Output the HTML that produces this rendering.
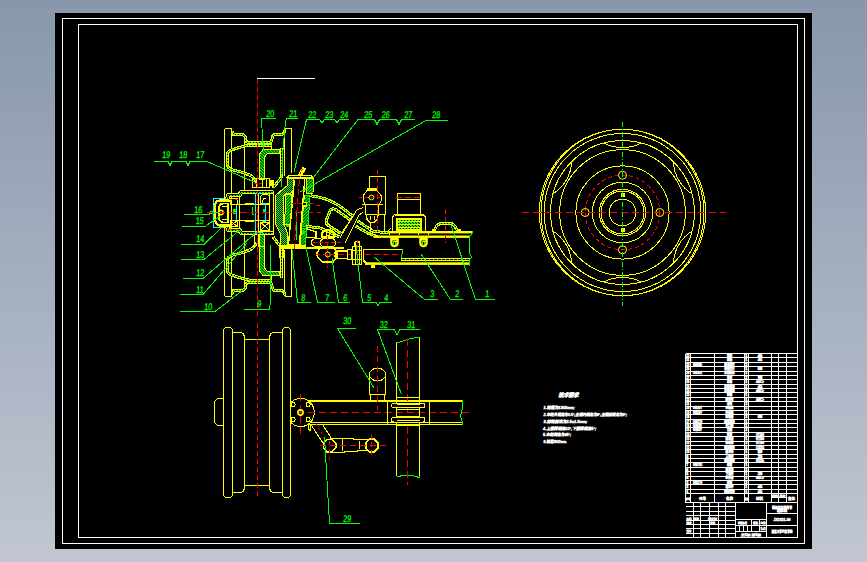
<!DOCTYPE html>
<html lang="zh"><head><meta charset="utf-8"><title>CAD</title>
<style>
html,body{margin:0;padding:0;background:#a5aec2;overflow:hidden}
body{width:867px;height:562px}
svg{display:block}
text{font-family:"Liberation Sans","Noto Sans CJK SC",sans-serif}
</style></head><body>
<svg width="867" height="562" viewBox="0 0 867 562" shape-rendering="crispEdges" text-rendering="optimizeLegibility">
<defs>
<linearGradient id="bg" x1="0" y1="0" x2="0" y2="1"><stop offset="0" stop-color="#8897ac"/><stop offset="1" stop-color="#c1c6d2"/></linearGradient>
<pattern id="h1" width="3" height="3" patternUnits="userSpaceOnUse"><rect width="3" height="3" fill="#000"/><path d="M-1,1 L1,-1 M0,3 L3,0 M2,4 L4,2" stroke="#00ff00" stroke-width="1.25" shape-rendering="geometricPrecision"/></pattern>
<pattern id="h1b" width="3" height="3" patternUnits="userSpaceOnUse"><rect width="3" height="3" fill="#000"/><path d="M-1,2 L1,4 M0,0 L3,3 M2,-1 L4,1" stroke="#00ff00" stroke-width="1.25" shape-rendering="geometricPrecision"/></pattern>
<pattern id="h2" width="2" height="2" patternUnits="userSpaceOnUse"><rect width="2" height="2" fill="#000"/><rect width="1" height="1" fill="#00ff00"/><rect x="1" y="1" width="1" height="1" fill="#00ff00"/></pattern>
<pattern id="h3" x="0" y="218" width="3" height="3" patternUnits="userSpaceOnUse"><rect width="3" height="3" fill="#00ff00"/><rect width="3" height="1" fill="#ffff00"/><rect x="1" y="1" width="1" height="1" fill="#000"/><rect x="2" y="2" width="1" height="1" fill="#000"/></pattern>
</defs>
<rect x="0" y="0" width="867" height="562" fill="url(#bg)"/>
<rect x="55" y="13" width="757" height="536" fill="#000"/>
<rect x="62.5" y="18.5" width="742" height="525" rx="0" fill="none" stroke="#ffffff" stroke-width="1"/>
<rect x="78.5" y="24.5" width="719" height="513" rx="0" fill="none" stroke="#ffffff" stroke-width="1"/>
<circle cx="622.5" cy="212.5" r="83.2" fill="none" stroke="#ffff00" stroke-width="1"/>
<circle cx="622.5" cy="212.5" r="71.9" fill="none" stroke="#ffff00" stroke-width="1"/>
<circle cx="622.5" cy="212.5" r="62.8" fill="none" stroke="#ffff00" stroke-width="1"/>
<circle cx="622.5" cy="212.5" r="46.6" fill="none" stroke="#ffff00" stroke-width="1"/>
<circle cx="622.5" cy="212.5" r="30.2" fill="none" stroke="#ffff00" stroke-width="1"/>
<circle cx="622.5" cy="212.5" r="23.2" fill="none" stroke="#ffff00" stroke-width="1"/>
<circle cx="622.5" cy="212.5" r="21.5" fill="none" stroke="#ffff00" stroke-width="1"/>
<circle cx="622.5" cy="212.5" r="13.4" fill="none" stroke="#ffff00" stroke-width="1"/>
<ellipse cx="622.5" cy="212.5" rx="81.5" ry="83.2" fill="none" stroke="#ff0"/>
<ellipse cx="622.5" cy="212.5" rx="78.4" ry="79" fill="none" stroke="#ff0"/>
<circle cx="622.5" cy="212.5" r="37.3" fill="none" stroke="#ff0000" stroke-width="1" stroke-dasharray="4 3"/>
<circle cx="659.8" cy="212.5" r="4" fill="none" stroke="#ffff00" stroke-width="1" shape-rendering="geometricPrecision"/>
<circle cx="622.5" cy="249.8" r="4" fill="none" stroke="#ffff00" stroke-width="1" shape-rendering="geometricPrecision"/>
<circle cx="585.2" cy="212.5" r="4" fill="none" stroke="#ffff00" stroke-width="1" shape-rendering="geometricPrecision"/>
<circle cx="622.5" cy="175.2" r="4" fill="none" stroke="#ffff00" stroke-width="1" shape-rendering="geometricPrecision"/>
<path d="M603.89,143.05 A40,40 0 0 0 641.11,143.05" fill="none" stroke="#ffff00" stroke-width="1"/>
<path d="M673.34,161.66 A40,40 0 0 0 691.95,193.89" fill="none" stroke="#ffff00" stroke-width="1"/>
<path d="M691.95,231.11 A40,40 0 0 0 673.34,263.34" fill="none" stroke="#ffff00" stroke-width="1"/>
<path d="M641.11,281.95 A40,40 0 0 0 603.89,281.95" fill="none" stroke="#ffff00" stroke-width="1"/>
<path d="M571.66,263.34 A40,40 0 0 0 553.05,231.11" fill="none" stroke="#ffff00" stroke-width="1"/>
<path d="M553.05,193.89 A40,40 0 0 0 571.66,161.66" fill="none" stroke="#ffff00" stroke-width="1"/>
<rect x="621" y="193.5" width="3" height="3" rx="0" fill="#ffff00" stroke="#ffff00" stroke-width="1"/>
<rect x="621" y="228.5" width="3" height="3" rx="0" fill="#ffff00" stroke="#ffff00" stroke-width="1"/>
<line x1="522" y1="212.5" x2="726" y2="212.5" stroke="#ff0000" stroke-width="1" stroke-dasharray="7 4"/>
<line x1="622.5" y1="122" x2="622.5" y2="306" stroke="#00ff00" stroke-width="1" stroke-dasharray="5 2 1 2"/>
<polyline points="223.5,412.5 223.5,329.5 225.5,327.5 230.5,327.5 232.5,329.5 232.5,332.5 241.5,332.5 243.5,334 244.5,337 244.5,339.5 257.5,339.5" fill="none" stroke="#ffff00" stroke-width="1"/>
<polyline points="223.5,412.5 223.5,495.5 225.5,497.5 230.5,497.5 232.5,495.5 232.5,492.5 241.5,492.5 243.5,491 244.5,488 244.5,485.5 257.5,485.5" fill="none" stroke="#ffff00" stroke-width="1"/>
<polyline points="290.5,412.5 290.5,329.5 288.5,327.5 284.5,327.5 282.5,329.5 282.5,332.5 272.5,332.5 270.5,334 269.5,337 269.5,339.5 257.5,339.5" fill="none" stroke="#ffff00" stroke-width="1"/>
<polyline points="290.5,412.5 290.5,495.5 288.5,497.5 284.5,497.5 282.5,495.5 282.5,492.5 272.5,492.5 270.5,491 269.5,488 269.5,485.5 257.5,485.5" fill="none" stroke="#ffff00" stroke-width="1"/>
<line x1="232.5" y1="332.5" x2="232.5" y2="492.5" stroke="#ffff00" stroke-width="1"/>
<line x1="244.5" y1="339.5" x2="244.5" y2="485.5" stroke="#ffff00" stroke-width="1"/>
<line x1="269.5" y1="339.5" x2="269.5" y2="485.5" stroke="#ffff00" stroke-width="1"/>
<line x1="282.5" y1="332.5" x2="282.5" y2="492.5" stroke="#ffff00" stroke-width="1"/>
<line x1="257.5" y1="323" x2="257.5" y2="496" stroke="#ff0000" stroke-width="1" stroke-dasharray="5 3"/>
<path d="M223.5,398.5 H218.5 Q214.5,399.5 214.5,403.5 V420.5 Q214.5,424.5 218.5,425.5 H223.5" fill="none" stroke="#ffff00" stroke-width="1"/>
<path d="M290.5,402.8 A13.7,13.7 0 0 1 314.3,412.5 A13.7,13.7 0 0 1 290.5,422.2" fill="none" stroke="#ffff00" stroke-width="1"/>
<line x1="309" y1="401" x2="463" y2="401" stroke="#ffff00" stroke-width="2"/>
<line x1="311" y1="422.5" x2="463" y2="422.5" stroke="#ffff00" stroke-width="1"/>
<line x1="308" y1="424.5" x2="463" y2="424.5" stroke="#ffff00" stroke-width="1"/>
<line x1="297" y1="412.5" x2="470" y2="412.5" stroke="#ff0000" stroke-width="1" stroke-dasharray="7 4"/>
<line x1="300.5" y1="394" x2="300.5" y2="434" stroke="#ff0000" stroke-width="1" stroke-dasharray="7 4"/>
<circle cx="300.5" cy="412.5" r="2.6" fill="none" stroke="#ffff00" stroke-width="1.6" shape-rendering="geometricPrecision"/>
<rect x="291" y="402.5" width="4" height="4" rx="1.5" fill="none" stroke="#ffff00" stroke-width="1"/>
<rect x="306" y="402.5" width="4" height="4" rx="1.5" fill="none" stroke="#ffff00" stroke-width="1"/>
<rect x="291" y="417.5" width="4" height="4" rx="1.5" fill="none" stroke="#ffff00" stroke-width="1"/>
<rect x="306" y="417.5" width="4" height="4" rx="1.5" fill="none" stroke="#ffff00" stroke-width="1"/>
<polyline points="311.5,425.5 325,446" fill="none" stroke="#ffff00" stroke-width="1"/>
<polyline points="322.5,424.5 331.5,438.5" fill="none" stroke="#ffff00" stroke-width="1"/>
<polyline points="308,424.5 308,428.5 310,430.5 311,427 310,424.5" fill="none" stroke="#ffff00" stroke-width="1"/>
<line x1="316" y1="424" x2="326" y2="441" stroke="#ff0000" stroke-width="1" stroke-dasharray="2 3"/>
<polygon points="335.81,447.99 332.29,451.51 327.31,451.51 323.79,447.99 323.79,443.01 327.31,439.49 332.29,439.49 335.81,443.01" fill="none" stroke="#ffff00" stroke-width="1.4"/>
<polygon points="377.8,448.03 374.23,451.6 369.17,451.6 365.6,448.03 365.6,442.97 369.17,439.4 374.23,439.4 377.8,442.97" fill="none" stroke="#ffff00" stroke-width="2"/>
<polyline points="330,438.5 353,438.5 353,439.5 368,439.5" fill="none" stroke="#ffff00" stroke-width="1"/>
<polyline points="325,452.5 344,452.5 344,451.5 357,451.5 357,450.5 367,450.5" fill="none" stroke="#ffff00" stroke-width="1"/>
<line x1="342.5" y1="439" x2="342.5" y2="451" stroke="#ffff00" stroke-width="1"/>
<line x1="359.5" y1="441" x2="359.5" y2="449" stroke="#ffff00" stroke-width="1"/>
<line x1="320" y1="445.5" x2="386" y2="445.5" stroke="#ff0000" stroke-width="1" stroke-dasharray="6 4"/>
<line x1="329.5" y1="441" x2="329.5" y2="460" stroke="#ff0000" stroke-width="1" stroke-dasharray="4 4"/>
<line x1="371.5" y1="434" x2="371.5" y2="456" stroke="#ff0000" stroke-width="1" stroke-dasharray="5 3"/>
<ellipse cx="377.5" cy="374.5" rx="8" ry="6.5" fill="none" stroke="#ffff00"/>
<line x1="369.5" y1="374" x2="369.5" y2="394.5" stroke="#ffff00" stroke-width="1"/>
<line x1="385.5" y1="374" x2="385.5" y2="394.5" stroke="#ffff00" stroke-width="1"/>
<rect x="370.5" y="394.5" width="14" height="6" rx="0" fill="none" stroke="#ffff00" stroke-width="1"/>
<line x1="377.5" y1="346" x2="377.5" y2="410" stroke="#ff0000" stroke-width="1" stroke-dasharray="6 4"/>
<line x1="396.5" y1="342" x2="396.5" y2="476" stroke="#ffff00" stroke-width="1"/>
<line x1="419.5" y1="337" x2="419.5" y2="476" stroke="#ffff00" stroke-width="1"/>
<polyline points="396.5,342 399,342.5 407,339.5 414,338 420,337" fill="none" stroke="#00ff00" stroke-width="1"/>
<polyline points="396.5,476.5 400,476.5 401,475.5 412,475.5 416,476.5 419,477.5 420,476" fill="none" stroke="#00ff00" stroke-width="1"/>
<line x1="407.5" y1="339" x2="407.5" y2="485" stroke="#ff0000" stroke-width="1" stroke-dasharray="7 4"/>
<line x1="396.5" y1="397.5" x2="419.5" y2="397.5" stroke="#ffff00" stroke-width="1"/>
<line x1="396.5" y1="409.5" x2="419.5" y2="409.5" stroke="#ffff00" stroke-width="1"/>
<line x1="396.5" y1="416.5" x2="419.5" y2="416.5" stroke="#ffff00" stroke-width="1"/>
<line x1="396.5" y1="425.5" x2="419.5" y2="425.5" stroke="#ffff00" stroke-width="1"/>
<line x1="387.5" y1="401" x2="387.5" y2="424" stroke="#ffff00" stroke-width="1"/>
<line x1="429.5" y1="401" x2="429.5" y2="424" stroke="#ffff00" stroke-width="1"/>
<rect x="391.5" y="403.5" width="33.5" height="4" rx="2" fill="#000000" stroke="#ffff00" stroke-width="1"/>
<rect x="391.5" y="417.5" width="33.5" height="4.5" rx="2" fill="#000000" stroke="#ffff00" stroke-width="1"/>
<line x1="396.5" y1="404.5" x2="419.5" y2="404.5" stroke="#ffff00" stroke-width="1"/>
<line x1="396.5" y1="420.5" x2="419.5" y2="420.5" stroke="#ffff00" stroke-width="1"/>
<polyline points="462.5,400 462.5,408 461.5,412 460.5,417 462,421 462.5,425" fill="none" stroke="#00ff00" stroke-width="1"/>
<text x="558.5" y="396.8" font-size="5.6" fill="#ffffff" textLength="20" lengthAdjust="spacingAndGlyphs" font-weight="bold" stroke="#fff" stroke-width="0.55" font-style="italic">技术要求</text>
<text x="543.5" y="408.6" font-size="4" fill="#ffffff" textLength="31" lengthAdjust="spacingAndGlyphs" font-weight="normal" stroke="#fff" stroke-width="0.55" font-style="italic">1.轮距为1300mm;</text>
<text x="543.5" y="415.9" font-size="4" fill="#ffffff" textLength="83.5" lengthAdjust="spacingAndGlyphs" font-weight="normal" stroke="#fff" stroke-width="0.55" font-style="italic">2.车轮外倾角为0.5°,主销内倾角为8°,主销后倾角为3°;</text>
<text x="543.5" y="422.8" font-size="4" fill="#ffffff" textLength="43.5" lengthAdjust="spacingAndGlyphs" font-weight="normal" stroke="#fff" stroke-width="0.55" font-style="italic">3.前轮前束为2.5±1.5mm;</text>
<text x="543" y="430" font-size="4" fill="#ffffff" textLength="53" lengthAdjust="spacingAndGlyphs" font-weight="normal" stroke="#fff" stroke-width="0.55" font-style="italic">4.上摆臂倾角10°,下摆臂倾角5°;</text>
<text x="543" y="436.3" font-size="4" fill="#ffffff" textLength="28" lengthAdjust="spacingAndGlyphs" font-weight="normal" stroke="#fff" stroke-width="0.55" font-style="italic">5.车轮转角为45°;</text>
<text x="543.5" y="442.9" font-size="4" fill="#ffffff" textLength="23.5" lengthAdjust="spacingAndGlyphs" font-weight="normal" stroke="#fff" stroke-width="0.55" font-style="italic">6.轴距2600mm.</text>
<line x1="685.5" y1="353.5" x2="797.5" y2="353.5" stroke="#ffffff" stroke-width="1"/>
<line x1="685.5" y1="357.5" x2="797.5" y2="357.5" stroke="#ffffff" stroke-width="1"/>
<line x1="685.5" y1="362.5" x2="797.5" y2="362.5" stroke="#ffffff" stroke-width="1"/>
<line x1="685.5" y1="366.5" x2="797.5" y2="366.5" stroke="#ffffff" stroke-width="1"/>
<line x1="685.5" y1="371.5" x2="797.5" y2="371.5" stroke="#ffffff" stroke-width="1"/>
<line x1="685.5" y1="375.5" x2="797.5" y2="375.5" stroke="#ffffff" stroke-width="1"/>
<line x1="685.5" y1="379.5" x2="797.5" y2="379.5" stroke="#ffffff" stroke-width="1"/>
<line x1="685.5" y1="384.5" x2="797.5" y2="384.5" stroke="#ffffff" stroke-width="1"/>
<line x1="685.5" y1="388.5" x2="797.5" y2="388.5" stroke="#ffffff" stroke-width="1"/>
<line x1="685.5" y1="392.5" x2="797.5" y2="392.5" stroke="#ffffff" stroke-width="1"/>
<line x1="685.5" y1="397.5" x2="797.5" y2="397.5" stroke="#ffffff" stroke-width="1"/>
<line x1="685.5" y1="401.5" x2="797.5" y2="401.5" stroke="#ffffff" stroke-width="1"/>
<line x1="685.5" y1="406.5" x2="797.5" y2="406.5" stroke="#ffffff" stroke-width="1"/>
<line x1="685.5" y1="410.5" x2="797.5" y2="410.5" stroke="#ffffff" stroke-width="1"/>
<line x1="685.5" y1="414.5" x2="797.5" y2="414.5" stroke="#ffffff" stroke-width="1"/>
<line x1="685.5" y1="419.5" x2="797.5" y2="419.5" stroke="#ffffff" stroke-width="1"/>
<line x1="685.5" y1="423.5" x2="797.5" y2="423.5" stroke="#ffffff" stroke-width="1"/>
<line x1="685.5" y1="427.5" x2="797.5" y2="427.5" stroke="#ffffff" stroke-width="1"/>
<line x1="685.5" y1="432.5" x2="797.5" y2="432.5" stroke="#ffffff" stroke-width="1"/>
<line x1="685.5" y1="436.5" x2="797.5" y2="436.5" stroke="#ffffff" stroke-width="1"/>
<line x1="685.5" y1="441.5" x2="797.5" y2="441.5" stroke="#ffffff" stroke-width="1"/>
<line x1="685.5" y1="445.5" x2="797.5" y2="445.5" stroke="#ffffff" stroke-width="1"/>
<line x1="685.5" y1="449.5" x2="797.5" y2="449.5" stroke="#ffffff" stroke-width="1"/>
<line x1="685.5" y1="454.5" x2="797.5" y2="454.5" stroke="#ffffff" stroke-width="1"/>
<line x1="685.5" y1="458.5" x2="797.5" y2="458.5" stroke="#ffffff" stroke-width="1"/>
<line x1="685.5" y1="462.5" x2="797.5" y2="462.5" stroke="#ffffff" stroke-width="1"/>
<line x1="685.5" y1="467.5" x2="797.5" y2="467.5" stroke="#ffffff" stroke-width="1"/>
<line x1="685.5" y1="471.5" x2="797.5" y2="471.5" stroke="#ffffff" stroke-width="1"/>
<line x1="685.5" y1="476.5" x2="797.5" y2="476.5" stroke="#ffffff" stroke-width="1"/>
<line x1="685.5" y1="480.5" x2="797.5" y2="480.5" stroke="#ffffff" stroke-width="1"/>
<line x1="685.5" y1="484.5" x2="797.5" y2="484.5" stroke="#ffffff" stroke-width="1"/>
<line x1="685.5" y1="489.5" x2="797.5" y2="489.5" stroke="#ffffff" stroke-width="1"/>
<line x1="685.5" y1="493.5" x2="797.5" y2="493.5" stroke="#ffffff" stroke-width="1"/>
<line x1="685.5" y1="353.5" x2="685.5" y2="502.5" stroke="#ffffff" stroke-width="1"/>
<line x1="690.5" y1="353.5" x2="690.5" y2="502.5" stroke="#ffffff" stroke-width="1"/>
<line x1="714.5" y1="353.5" x2="714.5" y2="502.5" stroke="#ffffff" stroke-width="1"/>
<line x1="744.5" y1="353.5" x2="744.5" y2="502.5" stroke="#ffffff" stroke-width="1"/>
<line x1="748.5" y1="353.5" x2="748.5" y2="502.5" stroke="#ffffff" stroke-width="1"/>
<line x1="771.5" y1="353.5" x2="771.5" y2="502.5" stroke="#ffffff" stroke-width="1"/>
<line x1="778.5" y1="353.5" x2="778.5" y2="502.5" stroke="#ffffff" stroke-width="1"/>
<line x1="786.5" y1="353.5" x2="786.5" y2="502.5" stroke="#ffffff" stroke-width="1"/>
<line x1="685.5" y1="502.5" x2="797.5" y2="502.5" stroke="#ffffff" stroke-width="1"/>
<line x1="771.5" y1="497.5" x2="786.5" y2="497.5" stroke="#ffffff" stroke-width="1"/>
<line x1="693.5" y1="502.5" x2="693.5" y2="537.5" stroke="#ffffff" stroke-width="1"/>
<line x1="700.5" y1="502.5" x2="700.5" y2="537.5" stroke="#ffffff" stroke-width="1"/>
<line x1="709.5" y1="502.5" x2="709.5" y2="537.5" stroke="#ffffff" stroke-width="1"/>
<line x1="718.5" y1="502.5" x2="718.5" y2="537.5" stroke="#ffffff" stroke-width="1"/>
<line x1="725.5" y1="502.5" x2="725.5" y2="537.5" stroke="#ffffff" stroke-width="1"/>
<line x1="735.5" y1="502.5" x2="735.5" y2="537.5" stroke="#ffffff" stroke-width="1"/>
<line x1="766.5" y1="502.5" x2="766.5" y2="537.5" stroke="#ffffff" stroke-width="1"/>
<line x1="685.5" y1="506.5" x2="735.5" y2="506.5" stroke="#ffffff" stroke-width="1"/>
<line x1="685.5" y1="511.5" x2="735.5" y2="511.5" stroke="#ffffff" stroke-width="1"/>
<line x1="685.5" y1="515.5" x2="735.5" y2="515.5" stroke="#ffffff" stroke-width="1"/>
<line x1="685.5" y1="520.5" x2="735.5" y2="520.5" stroke="#ffffff" stroke-width="1"/>
<line x1="685.5" y1="524.5" x2="735.5" y2="524.5" stroke="#ffffff" stroke-width="1"/>
<line x1="685.5" y1="528.5" x2="735.5" y2="528.5" stroke="#ffffff" stroke-width="1"/>
<line x1="685.5" y1="533.5" x2="735.5" y2="533.5" stroke="#ffffff" stroke-width="1"/>
<line x1="735.5" y1="519.5" x2="766.5" y2="519.5" stroke="#ffffff" stroke-width="1"/>
<line x1="735.5" y1="525.5" x2="766.5" y2="525.5" stroke="#ffffff" stroke-width="1"/>
<line x1="735.5" y1="531.5" x2="766.5" y2="531.5" stroke="#ffffff" stroke-width="1"/>
<line x1="751.5" y1="519.5" x2="751.5" y2="531.5" stroke="#ffffff" stroke-width="1"/>
<line x1="759.5" y1="519.5" x2="759.5" y2="531.5" stroke="#ffffff" stroke-width="1"/>
<line x1="739.5" y1="525.5" x2="739.5" y2="531.5" stroke="#ffffff" stroke-width="1"/>
<line x1="743.5" y1="525.5" x2="743.5" y2="531.5" stroke="#ffffff" stroke-width="1"/>
<line x1="747.5" y1="525.5" x2="747.5" y2="531.5" stroke="#ffffff" stroke-width="1"/>
<line x1="766.5" y1="513.5" x2="797.5" y2="513.5" stroke="#ffffff" stroke-width="1"/>
<line x1="766.5" y1="525.5" x2="797.5" y2="525.5" stroke="#ffffff" stroke-width="1"/>
<text x="686.3" y="356.98" font-size="3.2" fill="#fff" stroke="#fff" stroke-width="0.45" font-weight="bold" text-anchor="start" textLength="3" lengthAdjust="spacingAndGlyphs">32</text>
<text x="729.5" y="356.98" font-size="3.6" fill="#fff" stroke="#fff" stroke-width="0.45" font-weight="bold" text-anchor="middle" textLength="5.2" lengthAdjust="spacingAndGlyphs">锁销</text>
<text x="745.3" y="356.98" font-size="3.2" fill="#fff" stroke="#fff" stroke-width="0.45" font-weight="bold" text-anchor="start" textLength="2" lengthAdjust="spacingAndGlyphs">1</text>
<text x="760" y="356.98" font-size="3.2" fill="#fff" stroke="#fff" stroke-width="0.45" font-weight="bold" text-anchor="middle" textLength="4.4" lengthAdjust="spacingAndGlyphs">45</text>
<text x="686.3" y="361.35" font-size="3.2" fill="#fff" stroke="#fff" stroke-width="0.45" font-weight="bold" text-anchor="start" textLength="3" lengthAdjust="spacingAndGlyphs">31</text>
<text x="729.5" y="361.35" font-size="3.6" fill="#fff" stroke="#fff" stroke-width="0.45" font-weight="bold" text-anchor="middle" textLength="5.2" lengthAdjust="spacingAndGlyphs">前轴</text>
<text x="745.3" y="361.35" font-size="3.2" fill="#fff" stroke="#fff" stroke-width="0.45" font-weight="bold" text-anchor="start" textLength="2" lengthAdjust="spacingAndGlyphs">1</text>
<text x="760" y="361.35" font-size="3.2" fill="#fff" stroke="#fff" stroke-width="0.45" font-weight="bold" text-anchor="middle" textLength="4.4" lengthAdjust="spacingAndGlyphs">45</text>
<text x="686.3" y="365.73" font-size="3.2" fill="#fff" stroke="#fff" stroke-width="0.45" font-weight="bold" text-anchor="start" textLength="3" lengthAdjust="spacingAndGlyphs">30</text>
<text x="693" y="365.73" font-size="3.2" fill="#fff" stroke="#fff" stroke-width="0.45" font-weight="bold" text-anchor="start" textLength="9" lengthAdjust="spacingAndGlyphs">GB85</text>
<text x="729.5" y="365.73" font-size="3.6" fill="#fff" stroke="#fff" stroke-width="0.45" font-weight="bold" text-anchor="middle" textLength="10.4" lengthAdjust="spacingAndGlyphs">限位螺钉</text>
<text x="745.3" y="365.73" font-size="3.2" fill="#fff" stroke="#fff" stroke-width="0.45" font-weight="bold" text-anchor="start" textLength="2" lengthAdjust="spacingAndGlyphs">2</text>
<text x="686.3" y="370.1" font-size="3.2" fill="#fff" stroke="#fff" stroke-width="0.45" font-weight="bold" text-anchor="start" textLength="3" lengthAdjust="spacingAndGlyphs">29</text>
<text x="729.5" y="370.1" font-size="3.6" fill="#fff" stroke="#fff" stroke-width="0.45" font-weight="bold" text-anchor="middle" textLength="10.4" lengthAdjust="spacingAndGlyphs">调整垫片</text>
<text x="745.3" y="370.1" font-size="3.2" fill="#fff" stroke="#fff" stroke-width="0.45" font-weight="bold" text-anchor="start" textLength="2" lengthAdjust="spacingAndGlyphs">1</text>
<text x="760" y="370.1" font-size="3.2" fill="#fff" stroke="#fff" stroke-width="0.45" font-weight="bold" text-anchor="middle" textLength="4.4" lengthAdjust="spacingAndGlyphs">08</text>
<text x="686.3" y="374.48" font-size="3.2" fill="#fff" stroke="#fff" stroke-width="0.45" font-weight="bold" text-anchor="start" textLength="3" lengthAdjust="spacingAndGlyphs">28</text>
<text x="693" y="374.48" font-size="3.2" fill="#fff" stroke="#fff" stroke-width="0.45" font-weight="bold" text-anchor="start" textLength="9" lengthAdjust="spacingAndGlyphs">GB301</text>
<text x="729.5" y="374.48" font-size="3.6" fill="#fff" stroke="#fff" stroke-width="0.45" font-weight="bold" text-anchor="middle" textLength="10.4" lengthAdjust="spacingAndGlyphs">止推轴承</text>
<text x="745.3" y="374.48" font-size="3.2" fill="#fff" stroke="#fff" stroke-width="0.45" font-weight="bold" text-anchor="start" textLength="2" lengthAdjust="spacingAndGlyphs">1</text>
<text x="686.3" y="378.85" font-size="3.2" fill="#fff" stroke="#fff" stroke-width="0.45" font-weight="bold" text-anchor="start" textLength="3" lengthAdjust="spacingAndGlyphs">27</text>
<text x="729.5" y="378.85" font-size="3.6" fill="#fff" stroke="#fff" stroke-width="0.45" font-weight="bold" text-anchor="middle" textLength="5.2" lengthAdjust="spacingAndGlyphs">衬套</text>
<text x="745.3" y="378.85" font-size="3.2" fill="#fff" stroke="#fff" stroke-width="0.45" font-weight="bold" text-anchor="start" textLength="2" lengthAdjust="spacingAndGlyphs">2</text>
<text x="760" y="378.85" font-size="3.2" fill="#fff" stroke="#fff" stroke-width="0.45" font-weight="bold" text-anchor="middle" textLength="4.4" lengthAdjust="spacingAndGlyphs">青铜</text>
<text x="686.3" y="383.23" font-size="3.2" fill="#fff" stroke="#fff" stroke-width="0.45" font-weight="bold" text-anchor="start" textLength="3" lengthAdjust="spacingAndGlyphs">26</text>
<text x="729.5" y="383.23" font-size="3.6" fill="#fff" stroke="#fff" stroke-width="0.45" font-weight="bold" text-anchor="middle" textLength="5.2" lengthAdjust="spacingAndGlyphs">主销</text>
<text x="745.3" y="383.23" font-size="3.2" fill="#fff" stroke="#fff" stroke-width="0.45" font-weight="bold" text-anchor="start" textLength="2" lengthAdjust="spacingAndGlyphs">1</text>
<text x="760" y="383.23" font-size="3.2" fill="#fff" stroke="#fff" stroke-width="0.45" font-weight="bold" text-anchor="middle" textLength="8" lengthAdjust="spacingAndGlyphs">40Cr</text>
<text x="686.3" y="387.6" font-size="3.2" fill="#fff" stroke="#fff" stroke-width="0.45" font-weight="bold" text-anchor="start" textLength="3" lengthAdjust="spacingAndGlyphs">25</text>
<text x="729.5" y="387.6" font-size="3.6" fill="#fff" stroke="#fff" stroke-width="0.45" font-weight="bold" text-anchor="middle" textLength="10.4" lengthAdjust="spacingAndGlyphs">车轮螺母</text>
<text x="745.3" y="387.6" font-size="3.2" fill="#fff" stroke="#fff" stroke-width="0.45" font-weight="bold" text-anchor="start" textLength="2" lengthAdjust="spacingAndGlyphs">1</text>
<text x="760" y="387.6" font-size="3.2" fill="#fff" stroke="#fff" stroke-width="0.45" font-weight="bold" text-anchor="middle" textLength="4.4" lengthAdjust="spacingAndGlyphs">45</text>
<text x="686.3" y="391.98" font-size="3.2" fill="#fff" stroke="#fff" stroke-width="0.45" font-weight="bold" text-anchor="start" textLength="3" lengthAdjust="spacingAndGlyphs">24</text>
<text x="729.5" y="391.98" font-size="3.6" fill="#fff" stroke="#fff" stroke-width="0.45" font-weight="bold" text-anchor="middle" textLength="10.4" lengthAdjust="spacingAndGlyphs">车轮螺栓</text>
<text x="745.3" y="391.98" font-size="3.2" fill="#fff" stroke="#fff" stroke-width="0.45" font-weight="bold" text-anchor="start" textLength="2" lengthAdjust="spacingAndGlyphs">2</text>
<text x="760" y="391.98" font-size="3.2" fill="#fff" stroke="#fff" stroke-width="0.45" font-weight="bold" text-anchor="middle" textLength="8" lengthAdjust="spacingAndGlyphs">40Cr</text>
<text x="686.3" y="396.35" font-size="3.2" fill="#fff" stroke="#fff" stroke-width="0.45" font-weight="bold" text-anchor="start" textLength="3" lengthAdjust="spacingAndGlyphs">23</text>
<text x="729.5" y="396.35" font-size="3.6" fill="#fff" stroke="#fff" stroke-width="0.45" font-weight="bold" text-anchor="middle" textLength="5.2" lengthAdjust="spacingAndGlyphs">轮辋</text>
<text x="745.3" y="396.35" font-size="3.2" fill="#fff" stroke="#fff" stroke-width="0.45" font-weight="bold" text-anchor="start" textLength="2" lengthAdjust="spacingAndGlyphs">1</text>
<text x="686.3" y="400.73" font-size="3.2" fill="#fff" stroke="#fff" stroke-width="0.45" font-weight="bold" text-anchor="start" textLength="3" lengthAdjust="spacingAndGlyphs">22</text>
<text x="729.5" y="400.73" font-size="3.6" fill="#fff" stroke="#fff" stroke-width="0.45" font-weight="bold" text-anchor="middle" textLength="7.8" lengthAdjust="spacingAndGlyphs">转向节</text>
<text x="745.3" y="400.73" font-size="3.2" fill="#fff" stroke="#fff" stroke-width="0.45" font-weight="bold" text-anchor="start" textLength="2" lengthAdjust="spacingAndGlyphs">1</text>
<text x="760" y="400.73" font-size="3.2" fill="#fff" stroke="#fff" stroke-width="0.45" font-weight="bold" text-anchor="middle" textLength="8" lengthAdjust="spacingAndGlyphs">40Cr</text>
<text x="686.3" y="405.1" font-size="3.2" fill="#fff" stroke="#fff" stroke-width="0.45" font-weight="bold" text-anchor="start" textLength="3" lengthAdjust="spacingAndGlyphs">21</text>
<text x="729.5" y="405.1" font-size="3.6" fill="#fff" stroke="#fff" stroke-width="0.45" font-weight="bold" text-anchor="middle" textLength="5.2" lengthAdjust="spacingAndGlyphs">油封</text>
<text x="745.3" y="405.1" font-size="3.2" fill="#fff" stroke="#fff" stroke-width="0.45" font-weight="bold" text-anchor="start" textLength="2" lengthAdjust="spacingAndGlyphs">2</text>
<text x="686.3" y="409.48" font-size="3.2" fill="#fff" stroke="#fff" stroke-width="0.45" font-weight="bold" text-anchor="start" textLength="3" lengthAdjust="spacingAndGlyphs">20</text>
<text x="693" y="409.48" font-size="3.2" fill="#fff" stroke="#fff" stroke-width="0.45" font-weight="bold" text-anchor="start" textLength="9" lengthAdjust="spacingAndGlyphs">GB297</text>
<text x="729.5" y="409.48" font-size="3.6" fill="#fff" stroke="#fff" stroke-width="0.45" font-weight="bold" text-anchor="middle" textLength="7.8" lengthAdjust="spacingAndGlyphs">内轴承</text>
<text x="745.3" y="409.48" font-size="3.2" fill="#fff" stroke="#fff" stroke-width="0.45" font-weight="bold" text-anchor="start" textLength="2" lengthAdjust="spacingAndGlyphs">1</text>
<text x="686.3" y="413.85" font-size="3.2" fill="#fff" stroke="#fff" stroke-width="0.45" font-weight="bold" text-anchor="start" textLength="3" lengthAdjust="spacingAndGlyphs">19</text>
<text x="693" y="413.85" font-size="3.2" fill="#fff" stroke="#fff" stroke-width="0.45" font-weight="bold" text-anchor="start" textLength="9" lengthAdjust="spacingAndGlyphs">GB297</text>
<text x="729.5" y="413.85" font-size="3.6" fill="#fff" stroke="#fff" stroke-width="0.45" font-weight="bold" text-anchor="middle" textLength="7.8" lengthAdjust="spacingAndGlyphs">外轴承</text>
<text x="745.3" y="413.85" font-size="3.2" fill="#fff" stroke="#fff" stroke-width="0.45" font-weight="bold" text-anchor="start" textLength="2" lengthAdjust="spacingAndGlyphs">1</text>
<text x="686.3" y="418.23" font-size="3.2" fill="#fff" stroke="#fff" stroke-width="0.45" font-weight="bold" text-anchor="start" textLength="3" lengthAdjust="spacingAndGlyphs">18</text>
<text x="729.5" y="418.23" font-size="3.6" fill="#fff" stroke="#fff" stroke-width="0.45" font-weight="bold" text-anchor="middle" textLength="7.8" lengthAdjust="spacingAndGlyphs">轮毂盖</text>
<text x="745.3" y="418.23" font-size="3.2" fill="#fff" stroke="#fff" stroke-width="0.45" font-weight="bold" text-anchor="start" textLength="2" lengthAdjust="spacingAndGlyphs">2</text>
<text x="760" y="418.23" font-size="3.2" fill="#fff" stroke="#fff" stroke-width="0.45" font-weight="bold" text-anchor="middle" textLength="4.4" lengthAdjust="spacingAndGlyphs">08</text>
<text x="686.3" y="422.6" font-size="3.2" fill="#fff" stroke="#fff" stroke-width="0.45" font-weight="bold" text-anchor="start" textLength="3" lengthAdjust="spacingAndGlyphs">17</text>
<text x="693" y="422.6" font-size="3.2" fill="#fff" stroke="#fff" stroke-width="0.45" font-weight="bold" text-anchor="start" textLength="9" lengthAdjust="spacingAndGlyphs">GB6178</text>
<text x="729.5" y="422.6" font-size="3.6" fill="#fff" stroke="#fff" stroke-width="0.45" font-weight="bold" text-anchor="middle" textLength="10.4" lengthAdjust="spacingAndGlyphs">槽形螺母</text>
<text x="745.3" y="422.6" font-size="3.2" fill="#fff" stroke="#fff" stroke-width="0.45" font-weight="bold" text-anchor="start" textLength="2" lengthAdjust="spacingAndGlyphs">1</text>
<text x="686.3" y="426.98" font-size="3.2" fill="#fff" stroke="#fff" stroke-width="0.45" font-weight="bold" text-anchor="start" textLength="3" lengthAdjust="spacingAndGlyphs">16</text>
<text x="693" y="426.98" font-size="3.2" fill="#fff" stroke="#fff" stroke-width="0.45" font-weight="bold" text-anchor="start" textLength="9" lengthAdjust="spacingAndGlyphs">GB91</text>
<text x="729.5" y="426.98" font-size="3.6" fill="#fff" stroke="#fff" stroke-width="0.45" font-weight="bold" text-anchor="middle" textLength="7.8" lengthAdjust="spacingAndGlyphs">开口销</text>
<text x="745.3" y="426.98" font-size="3.2" fill="#fff" stroke="#fff" stroke-width="0.45" font-weight="bold" text-anchor="start" textLength="2" lengthAdjust="spacingAndGlyphs">1</text>
<text x="686.3" y="431.35" font-size="3.2" fill="#fff" stroke="#fff" stroke-width="0.45" font-weight="bold" text-anchor="start" textLength="3" lengthAdjust="spacingAndGlyphs">15</text>
<text x="693" y="431.35" font-size="3.2" fill="#fff" stroke="#fff" stroke-width="0.45" font-weight="bold" text-anchor="start" textLength="9" lengthAdjust="spacingAndGlyphs">GB97</text>
<text x="729.5" y="431.35" font-size="3.6" fill="#fff" stroke="#fff" stroke-width="0.45" font-weight="bold" text-anchor="middle" textLength="5.2" lengthAdjust="spacingAndGlyphs">垫圈</text>
<text x="745.3" y="431.35" font-size="3.2" fill="#fff" stroke="#fff" stroke-width="0.45" font-weight="bold" text-anchor="start" textLength="2" lengthAdjust="spacingAndGlyphs">2</text>
<text x="686.3" y="435.73" font-size="3.2" fill="#fff" stroke="#fff" stroke-width="0.45" font-weight="bold" text-anchor="start" textLength="3" lengthAdjust="spacingAndGlyphs">14</text>
<text x="729.5" y="435.73" font-size="3.6" fill="#fff" stroke="#fff" stroke-width="0.45" font-weight="bold" text-anchor="middle" textLength="5.2" lengthAdjust="spacingAndGlyphs">轮毂</text>
<text x="745.3" y="435.73" font-size="3.2" fill="#fff" stroke="#fff" stroke-width="0.45" font-weight="bold" text-anchor="start" textLength="2" lengthAdjust="spacingAndGlyphs">1</text>
<text x="760" y="435.73" font-size="3.2" fill="#fff" stroke="#fff" stroke-width="0.45" font-weight="bold" text-anchor="middle" textLength="8" lengthAdjust="spacingAndGlyphs">QT450</text>
<text x="686.3" y="440.1" font-size="3.2" fill="#fff" stroke="#fff" stroke-width="0.45" font-weight="bold" text-anchor="start" textLength="3" lengthAdjust="spacingAndGlyphs">13</text>
<text x="729.5" y="440.1" font-size="3.6" fill="#fff" stroke="#fff" stroke-width="0.45" font-weight="bold" text-anchor="middle" textLength="7.8" lengthAdjust="spacingAndGlyphs">制动鼓</text>
<text x="745.3" y="440.1" font-size="3.2" fill="#fff" stroke="#fff" stroke-width="0.45" font-weight="bold" text-anchor="start" textLength="2" lengthAdjust="spacingAndGlyphs">1</text>
<text x="760" y="440.1" font-size="3.2" fill="#fff" stroke="#fff" stroke-width="0.45" font-weight="bold" text-anchor="middle" textLength="8" lengthAdjust="spacingAndGlyphs">HT200</text>
<text x="686.3" y="444.48" font-size="3.2" fill="#fff" stroke="#fff" stroke-width="0.45" font-weight="bold" text-anchor="start" textLength="3" lengthAdjust="spacingAndGlyphs">12</text>
<text x="729.5" y="444.48" font-size="3.6" fill="#fff" stroke="#fff" stroke-width="0.45" font-weight="bold" text-anchor="middle" textLength="7.8" lengthAdjust="spacingAndGlyphs">制动蹄</text>
<text x="745.3" y="444.48" font-size="3.2" fill="#fff" stroke="#fff" stroke-width="0.45" font-weight="bold" text-anchor="start" textLength="2" lengthAdjust="spacingAndGlyphs">2</text>
<text x="760" y="444.48" font-size="3.2" fill="#fff" stroke="#fff" stroke-width="0.45" font-weight="bold" text-anchor="middle" textLength="8" lengthAdjust="spacingAndGlyphs">HT200</text>
<text x="686.3" y="448.85" font-size="3.2" fill="#fff" stroke="#fff" stroke-width="0.45" font-weight="bold" text-anchor="start" textLength="3" lengthAdjust="spacingAndGlyphs">11</text>
<text x="729.5" y="448.85" font-size="3.6" fill="#fff" stroke="#fff" stroke-width="0.45" font-weight="bold" text-anchor="middle" textLength="10.4" lengthAdjust="spacingAndGlyphs">制动底板</text>
<text x="745.3" y="448.85" font-size="3.2" fill="#fff" stroke="#fff" stroke-width="0.45" font-weight="bold" text-anchor="start" textLength="2" lengthAdjust="spacingAndGlyphs">1</text>
<text x="760" y="448.85" font-size="3.2" fill="#fff" stroke="#fff" stroke-width="0.45" font-weight="bold" text-anchor="middle" textLength="8" lengthAdjust="spacingAndGlyphs">Q235</text>
<text x="686.3" y="453.23" font-size="3.2" fill="#fff" stroke="#fff" stroke-width="0.45" font-weight="bold" text-anchor="start" textLength="3" lengthAdjust="spacingAndGlyphs">10</text>
<text x="729.5" y="453.23" font-size="3.6" fill="#fff" stroke="#fff" stroke-width="0.45" font-weight="bold" text-anchor="middle" textLength="7.8" lengthAdjust="spacingAndGlyphs">缓冲块</text>
<text x="745.3" y="453.23" font-size="3.2" fill="#fff" stroke="#fff" stroke-width="0.45" font-weight="bold" text-anchor="start" textLength="2" lengthAdjust="spacingAndGlyphs">1</text>
<text x="760" y="453.23" font-size="3.2" fill="#fff" stroke="#fff" stroke-width="0.45" font-weight="bold" text-anchor="middle" textLength="4.4" lengthAdjust="spacingAndGlyphs">橡胶</text>
<text x="686.3" y="457.6" font-size="3.2" fill="#fff" stroke="#fff" stroke-width="0.45" font-weight="bold" text-anchor="start" textLength="2" lengthAdjust="spacingAndGlyphs">9</text>
<text x="729.5" y="457.6" font-size="3.6" fill="#fff" stroke="#fff" stroke-width="0.45" font-weight="bold" text-anchor="middle" textLength="7.8" lengthAdjust="spacingAndGlyphs">上摆臂</text>
<text x="745.3" y="457.6" font-size="3.2" fill="#fff" stroke="#fff" stroke-width="0.45" font-weight="bold" text-anchor="start" textLength="2" lengthAdjust="spacingAndGlyphs">2</text>
<text x="760" y="457.6" font-size="3.2" fill="#fff" stroke="#fff" stroke-width="0.45" font-weight="bold" text-anchor="middle" textLength="4.4" lengthAdjust="spacingAndGlyphs">20</text>
<text x="686.3" y="461.98" font-size="3.2" fill="#fff" stroke="#fff" stroke-width="0.45" font-weight="bold" text-anchor="start" textLength="2" lengthAdjust="spacingAndGlyphs">8</text>
<text x="729.5" y="461.98" font-size="3.6" fill="#fff" stroke="#fff" stroke-width="0.45" font-weight="bold" text-anchor="middle" textLength="10.4" lengthAdjust="spacingAndGlyphs">螺旋弹簧</text>
<text x="745.3" y="461.98" font-size="3.2" fill="#fff" stroke="#fff" stroke-width="0.45" font-weight="bold" text-anchor="start" textLength="2" lengthAdjust="spacingAndGlyphs">1</text>
<text x="760" y="461.98" font-size="3.2" fill="#fff" stroke="#fff" stroke-width="0.45" font-weight="bold" text-anchor="middle" textLength="8" lengthAdjust="spacingAndGlyphs">60Si2Mn</text>
<text x="686.3" y="466.35" font-size="3.2" fill="#fff" stroke="#fff" stroke-width="0.45" font-weight="bold" text-anchor="start" textLength="2" lengthAdjust="spacingAndGlyphs">7</text>
<text x="693" y="466.35" font-size="3.2" fill="#fff" stroke="#fff" stroke-width="0.45" font-weight="bold" text-anchor="start" textLength="9" lengthAdjust="spacingAndGlyphs">GB5782</text>
<text x="729.5" y="466.35" font-size="3.6" fill="#fff" stroke="#fff" stroke-width="0.45" font-weight="bold" text-anchor="middle" textLength="5.2" lengthAdjust="spacingAndGlyphs">螺栓</text>
<text x="745.3" y="466.35" font-size="3.2" fill="#fff" stroke="#fff" stroke-width="0.45" font-weight="bold" text-anchor="start" textLength="2" lengthAdjust="spacingAndGlyphs">1</text>
<text x="686.3" y="470.73" font-size="3.2" fill="#fff" stroke="#fff" stroke-width="0.45" font-weight="bold" text-anchor="start" textLength="2" lengthAdjust="spacingAndGlyphs">6</text>
<text x="729.5" y="470.73" font-size="3.6" fill="#fff" stroke="#fff" stroke-width="0.45" font-weight="bold" text-anchor="middle" textLength="7.8" lengthAdjust="spacingAndGlyphs">减振器</text>
<text x="745.3" y="470.73" font-size="3.2" fill="#fff" stroke="#fff" stroke-width="0.45" font-weight="bold" text-anchor="start" textLength="2" lengthAdjust="spacingAndGlyphs">2</text>
<text x="686.3" y="475.1" font-size="3.2" fill="#fff" stroke="#fff" stroke-width="0.45" font-weight="bold" text-anchor="start" textLength="2" lengthAdjust="spacingAndGlyphs">5</text>
<text x="729.5" y="475.1" font-size="3.6" fill="#fff" stroke="#fff" stroke-width="0.45" font-weight="bold" text-anchor="middle" textLength="7.8" lengthAdjust="spacingAndGlyphs">下摆臂</text>
<text x="745.3" y="475.1" font-size="3.2" fill="#fff" stroke="#fff" stroke-width="0.45" font-weight="bold" text-anchor="start" textLength="2" lengthAdjust="spacingAndGlyphs">1</text>
<text x="760" y="475.1" font-size="3.2" fill="#fff" stroke="#fff" stroke-width="0.45" font-weight="bold" text-anchor="middle" textLength="4.4" lengthAdjust="spacingAndGlyphs">20</text>
<text x="686.3" y="479.48" font-size="3.2" fill="#fff" stroke="#fff" stroke-width="0.45" font-weight="bold" text-anchor="start" textLength="2" lengthAdjust="spacingAndGlyphs">4</text>
<text x="729.5" y="479.48" font-size="3.6" fill="#fff" stroke="#fff" stroke-width="0.45" font-weight="bold" text-anchor="middle" textLength="7.8" lengthAdjust="spacingAndGlyphs">球头销</text>
<text x="745.3" y="479.48" font-size="3.2" fill="#fff" stroke="#fff" stroke-width="0.45" font-weight="bold" text-anchor="start" textLength="2" lengthAdjust="spacingAndGlyphs">1</text>
<text x="760" y="479.48" font-size="3.2" fill="#fff" stroke="#fff" stroke-width="0.45" font-weight="bold" text-anchor="middle" textLength="8" lengthAdjust="spacingAndGlyphs">40Cr</text>
<text x="686.3" y="483.85" font-size="3.2" fill="#fff" stroke="#fff" stroke-width="0.45" font-weight="bold" text-anchor="start" textLength="2" lengthAdjust="spacingAndGlyphs">3</text>
<text x="693" y="483.85" font-size="3.2" fill="#fff" stroke="#fff" stroke-width="0.45" font-weight="bold" text-anchor="start" textLength="9" lengthAdjust="spacingAndGlyphs">GB6170</text>
<text x="729.5" y="483.85" font-size="3.6" fill="#fff" stroke="#fff" stroke-width="0.45" font-weight="bold" text-anchor="middle" textLength="5.2" lengthAdjust="spacingAndGlyphs">螺母</text>
<text x="745.3" y="483.85" font-size="3.2" fill="#fff" stroke="#fff" stroke-width="0.45" font-weight="bold" text-anchor="start" textLength="2" lengthAdjust="spacingAndGlyphs">2</text>
<text x="686.3" y="488.23" font-size="3.2" fill="#fff" stroke="#fff" stroke-width="0.45" font-weight="bold" text-anchor="start" textLength="2" lengthAdjust="spacingAndGlyphs">2</text>
<text x="729.5" y="488.23" font-size="3.6" fill="#fff" stroke="#fff" stroke-width="0.45" font-weight="bold" text-anchor="middle" textLength="7.8" lengthAdjust="spacingAndGlyphs">横拉杆</text>
<text x="745.3" y="488.23" font-size="3.2" fill="#fff" stroke="#fff" stroke-width="0.45" font-weight="bold" text-anchor="start" textLength="2" lengthAdjust="spacingAndGlyphs">1</text>
<text x="760" y="488.23" font-size="3.2" fill="#fff" stroke="#fff" stroke-width="0.45" font-weight="bold" text-anchor="middle" textLength="4.4" lengthAdjust="spacingAndGlyphs">45</text>
<text x="686.3" y="492.6" font-size="3.2" fill="#fff" stroke="#fff" stroke-width="0.45" font-weight="bold" text-anchor="start" textLength="2" lengthAdjust="spacingAndGlyphs">1</text>
<text x="729.5" y="492.6" font-size="3.6" fill="#fff" stroke="#fff" stroke-width="0.45" font-weight="bold" text-anchor="middle" textLength="10.4" lengthAdjust="spacingAndGlyphs">转向节臂</text>
<text x="745.3" y="492.6" font-size="3.2" fill="#fff" stroke="#fff" stroke-width="0.45" font-weight="bold" text-anchor="start" textLength="2" lengthAdjust="spacingAndGlyphs">1</text>
<text x="760" y="492.6" font-size="3.2" fill="#fff" stroke="#fff" stroke-width="0.45" font-weight="bold" text-anchor="middle" textLength="4.4" lengthAdjust="spacingAndGlyphs">45</text>
<text x="685.8" y="499.6" font-size="2.6" fill="#fff" stroke="#fff" stroke-width="0.45" font-weight="bold" text-anchor="start" textLength="4.4" lengthAdjust="spacingAndGlyphs">序号</text>
<text x="699" y="499.6" font-size="3.4" fill="#fff" stroke="#fff" stroke-width="0.45" font-weight="bold" text-anchor="start" textLength="7" lengthAdjust="spacingAndGlyphs">代号</text>
<text x="726" y="499.6" font-size="3.4" fill="#fff" stroke="#fff" stroke-width="0.45" font-weight="bold" text-anchor="start" textLength="7" lengthAdjust="spacingAndGlyphs">名称</text>
<text x="744.7" y="499.6" font-size="2.6" fill="#fff" stroke="#fff" stroke-width="0.45" font-weight="bold" text-anchor="start" textLength="3.6" lengthAdjust="spacingAndGlyphs">数量</text>
<text x="756" y="499.6" font-size="3.4" fill="#fff" stroke="#fff" stroke-width="0.45" font-weight="bold" text-anchor="start" textLength="7" lengthAdjust="spacingAndGlyphs">材料</text>
<text x="772" y="496.5" font-size="2.6" fill="#fff" stroke="#fff" stroke-width="0.45" font-weight="bold" text-anchor="start" textLength="6" lengthAdjust="spacingAndGlyphs">单件</text>
<text x="779.5" y="496.5" font-size="2.6" fill="#fff" stroke="#fff" stroke-width="0.45" font-weight="bold" text-anchor="start" textLength="6" lengthAdjust="spacingAndGlyphs">总计</text>
<text x="788" y="499.6" font-size="3.4" fill="#fff" stroke="#fff" stroke-width="0.45" font-weight="bold" text-anchor="start" textLength="7" lengthAdjust="spacingAndGlyphs">备注</text>
<text x="782" y="509" font-size="3.4" fill="#fff" stroke="#fff" stroke-width="0.45" font-weight="bold" text-anchor="middle" textLength="20" lengthAdjust="spacingAndGlyphs">前悬架与转向节</text>
<text x="782" y="512.3" font-size="3.4" fill="#fff" stroke="#fff" stroke-width="0.45" font-weight="bold" text-anchor="middle" textLength="10" lengthAdjust="spacingAndGlyphs">装配图</text>
<text x="782" y="521" font-size="4" fill="#fff" stroke="#fff" stroke-width="0.45" font-weight="bold" text-anchor="middle" textLength="17" lengthAdjust="spacingAndGlyphs">JX1021-00</text>
<text x="782" y="533" font-size="3.2" fill="#fff" stroke="#fff" stroke-width="0.45" font-weight="bold" text-anchor="middle" textLength="21" lengthAdjust="spacingAndGlyphs">某某大学汽车学院</text>
<text x="686.5" y="519.5" font-size="2.8" fill="#fff" stroke="#fff" stroke-width="0.45" font-weight="bold" text-anchor="start" textLength="5" lengthAdjust="spacingAndGlyphs">标记</text>
<text x="694" y="519.5" font-size="2.8" fill="#fff" stroke="#fff" stroke-width="0.45" font-weight="bold" text-anchor="start" textLength="5" lengthAdjust="spacingAndGlyphs">处数</text>
<text x="708" y="519.5" font-size="2.8" fill="#fff" stroke="#fff" stroke-width="0.45" font-weight="bold" text-anchor="start" textLength="9" lengthAdjust="spacingAndGlyphs">更改文件号</text>
<text x="686.5" y="523.5" font-size="2.8" fill="#fff" stroke="#fff" stroke-width="0.45" font-weight="bold" text-anchor="start" textLength="5" lengthAdjust="spacingAndGlyphs">签字</text>
<text x="710" y="523.5" font-size="2.8" fill="#fff" stroke="#fff" stroke-width="0.45" font-weight="bold" text-anchor="start" textLength="5" lengthAdjust="spacingAndGlyphs">日期</text>
<text x="686.5" y="531.5" font-size="2.8" fill="#fff" stroke="#fff" stroke-width="0.45" font-weight="bold" text-anchor="start" textLength="5" lengthAdjust="spacingAndGlyphs">设计</text>
<text x="738" y="524" font-size="2.8" fill="#fff" stroke="#fff" stroke-width="0.45" font-weight="bold" text-anchor="start" textLength="9" lengthAdjust="spacingAndGlyphs">图样标记</text>
<text x="753" y="524" font-size="2.8" fill="#fff" stroke="#fff" stroke-width="0.45" font-weight="bold" text-anchor="start" textLength="5" lengthAdjust="spacingAndGlyphs">重量</text>
<text x="760.5" y="524" font-size="2.8" fill="#fff" stroke="#fff" stroke-width="0.45" font-weight="bold" text-anchor="start" textLength="5" lengthAdjust="spacingAndGlyphs">比例</text>
<text x="760.5" y="530" font-size="2.8" fill="#fff" stroke="#fff" stroke-width="0.45" font-weight="bold" text-anchor="start" textLength="5" lengthAdjust="spacingAndGlyphs">1:2</text>
<text x="741" y="536" font-size="2.8" fill="#fff" stroke="#fff" stroke-width="0.45" font-weight="bold" text-anchor="start" textLength="20" lengthAdjust="spacingAndGlyphs">共1张 第1张</text>
<rect x="213.5" y="198.5" width="18" height="29" rx="0" fill="none" stroke="#00ffff" stroke-width="1"/>
<line x1="224.5" y1="130" x2="224.5" y2="199" stroke="#ffff00" stroke-width="1"/>
<line x1="224.5" y1="227" x2="224.5" y2="295" stroke="#ffff00" stroke-width="1"/>
<line x1="231.5" y1="130" x2="231.5" y2="295" stroke="#ffff00" stroke-width="1"/>
<line x1="244.5" y1="142" x2="244.5" y2="190" stroke="#ffff00" stroke-width="1"/>
<line x1="244.5" y1="235" x2="244.5" y2="283" stroke="#ffff00" stroke-width="1"/>
<line x1="284.5" y1="129" x2="284.5" y2="176" stroke="#ffff00" stroke-width="1"/>
<line x1="291.5" y1="129" x2="291.5" y2="173" stroke="#ffff00" stroke-width="1"/>
<line x1="284.5" y1="250" x2="284.5" y2="296" stroke="#ffff00" stroke-width="1"/>
<line x1="291.5" y1="250" x2="291.5" y2="296" stroke="#ffff00" stroke-width="1"/>
<line x1="271.5" y1="143" x2="271.5" y2="150" stroke="#ffff00" stroke-width="1"/>
<line x1="271.5" y1="275" x2="271.5" y2="282" stroke="#ffff00" stroke-width="1"/>
<polyline points="224.5,130 225.5,128.5 231,128.5 232.5,130.5" fill="none" stroke="#ffff00" stroke-width="1"/>
<polyline points="224.5,295 225.5,296.5 231,296.5 232.5,294.5" fill="none" stroke="#ffff00" stroke-width="1"/>
<polyline points="284.5,130 286,128.5 291,128.5 291.5,130" fill="none" stroke="#ffff00" stroke-width="1"/>
<polyline points="284.5,295 286,296.5 291,296.5 291.5,295" fill="none" stroke="#ffff00" stroke-width="1"/>
<polyline points="232.8,131 233.2,134.6 243,134.6 245.3,136.8 245.8,141 248,142.6 270,142.6 271.8,141 272.3,137 274,134.6 282,134.6 284,133 284.8,130" fill="none" stroke="#ffff00" stroke-width="3" stroke-linejoin="round"/>
<polyline points="232.8,131 233.2,134.6 243,134.6 245.3,136.8 245.8,141 248,142.6 270,142.6 271.8,141 272.3,137 274,134.6 282,134.6 284,133 284.8,130" fill="none" stroke="#000000" stroke-width="1" stroke-linejoin="round"/>
<polyline points="232.8,131 233.2,134.6 243,134.6 245.3,136.8 245.8,141 248,142.6 270,142.6 271.8,141 272.3,137 274,134.6 282,134.6 284,133 284.8,130" fill="none" stroke="#00ff00" stroke-width="1" stroke-dasharray="2 1"/>
<polyline points="232.8,294 233.2,290.4 243,290.4 245.3,288.2 245.8,284 248,282.4 270,282.4 271.8,284 272.3,288 274,290.4 282,290.4 284,292 284.8,295" fill="none" stroke="#ffff00" stroke-width="3" stroke-linejoin="round"/>
<polyline points="232.8,294 233.2,290.4 243,290.4 245.3,288.2 245.8,284 248,282.4 270,282.4 271.8,284 272.3,288 274,290.4 282,290.4 284,292 284.8,295" fill="none" stroke="#000000" stroke-width="1" stroke-linejoin="round"/>
<polyline points="232.8,294 233.2,290.4 243,290.4 245.3,288.2 245.8,284 248,282.4 270,282.4 271.8,284 272.3,288 274,290.4 282,290.4 284,292 284.8,295" fill="none" stroke="#00ff00" stroke-width="1" stroke-dasharray="2 1"/>
<polyline points="272,145 249,145 238,147.8 230.5,150.3 228,152.3 227,155.5 227,164 228.5,167.5 231.5,169.7 242,172.3 250,175.2 254,178 256.5,182" fill="none" stroke="#ffff00" stroke-width="3" stroke-linejoin="round"/>
<polyline points="272,145 249,145 238,147.8 230.5,150.3 228,152.3 227,155.5 227,164 228.5,167.5 231.5,169.7 242,172.3 250,175.2 254,178 256.5,182" fill="none" stroke="#000000" stroke-width="1" stroke-linejoin="round"/>
<polyline points="272,145 249,145 238,147.8 230.5,150.3 228,152.3 227,155.5 227,164 228.5,167.5 231.5,169.7 242,172.3 250,175.2 254,178 256.5,182" fill="none" stroke="#00ff00" stroke-width="1" stroke-dasharray="2 1"/>
<polyline points="272,280 249,280 238,277.2 230.5,274.7 228,272.7 227,269.5 227,261 228.5,257.5 231.5,255.3 242,252.7 250,249.8 254,247 256.5,243" fill="none" stroke="#ffff00" stroke-width="3" stroke-linejoin="round"/>
<polyline points="272,280 249,280 238,277.2 230.5,274.7 228,272.7 227,269.5 227,261 228.5,257.5 231.5,255.3 242,252.7 250,249.8 254,247 256.5,243" fill="none" stroke="#000000" stroke-width="1" stroke-linejoin="round"/>
<polyline points="272,280 249,280 238,277.2 230.5,274.7 228,272.7 227,269.5 227,261 228.5,257.5 231.5,255.3 242,252.7 250,249.8 254,247 256.5,243" fill="none" stroke="#00ff00" stroke-width="1" stroke-dasharray="2 1"/>
<polygon points="259.5,179 259.5,154 263,149.5 279.5,149.5 279.5,153.5 267.5,153.5 264.5,157 264.5,179" fill="url(#h1b)" stroke="#ffff00" stroke-width="1"/>
<polygon points="259.5,246 259.5,271 263,275.5 279.5,275.5 279.5,271.5 267.5,271.5 264.5,268 264.5,246" fill="url(#h1b)" stroke="#ffff00" stroke-width="1"/>
<polyline points="281,147.5 281,178 273,188" fill="none" stroke="#ffff00" stroke-width="3" stroke-linejoin="round"/>
<polyline points="281,147.5 281,178 273,188" fill="none" stroke="#000000" stroke-width="1" stroke-linejoin="round"/>
<polyline points="281,147.5 281,178 273,188" fill="none" stroke="#00ff00" stroke-width="1" stroke-dasharray="1 2"/>
<polyline points="281,277.5 281,247 273,237" fill="none" stroke="#ffff00" stroke-width="3" stroke-linejoin="round"/>
<polyline points="281,277.5 281,247 273,237" fill="none" stroke="#000000" stroke-width="1" stroke-linejoin="round"/>
<polyline points="281,277.5 281,247 273,237" fill="none" stroke="#00ff00" stroke-width="1" stroke-dasharray="1 2"/>
<rect x="252.5" y="178.5" width="17" height="9" rx="0" fill="none" stroke="#ffff00" stroke-width="1.6"/>
<line x1="256.5" y1="178.5" x2="256.5" y2="187.5" stroke="#ffff00" stroke-width="1"/>
<line x1="262.5" y1="178.5" x2="262.5" y2="187.5" stroke="#ffff00" stroke-width="1"/>
<line x1="266.5" y1="178.5" x2="266.5" y2="187.5" stroke="#ffff00" stroke-width="1"/>
<rect x="269.5" y="180.5" width="4" height="5" rx="0" fill="#ffff00" stroke="#ffff00" stroke-width="1"/>
<line x1="254" y1="183.5" x2="262" y2="183.5" stroke="#ff0000" stroke-width="1" stroke-dasharray="3 2"/>
<rect x="259.5" y="234.5" width="5" height="12" rx="0" fill="url(#h1b)" stroke="#ffff00" stroke-width="1"/>
<line x1="254.5" y1="235" x2="254.5" y2="247" stroke="#ffff00" stroke-width="1"/>
<line x1="258.5" y1="235" x2="258.5" y2="247" stroke="#ffff00" stroke-width="1"/>
<polyline points="227.3,199 228.5,195 239.5,195 241.5,192 273,192" fill="none" stroke="#ffff00" stroke-width="4.4" stroke-linejoin="round"/>
<polyline points="227.3,199 228.5,195 239.5,195 241.5,192 273,192" fill="none" stroke="#000000" stroke-width="2.4" stroke-linejoin="round"/>
<polyline points="227.3,199 228.5,195 239.5,195 241.5,192 273,192" fill="none" stroke="#00ff00" stroke-width="1" stroke-dasharray="2 1"/>
<polyline points="227.3,226 228.5,230 239.5,230 241.5,233 273,233" fill="none" stroke="#ffff00" stroke-width="4.4" stroke-linejoin="round"/>
<polyline points="227.3,226 228.5,230 239.5,230 241.5,233 273,233" fill="none" stroke="#000000" stroke-width="2.4" stroke-linejoin="round"/>
<polyline points="227.3,226 228.5,230 239.5,230 241.5,233 273,233" fill="none" stroke="#00ff00" stroke-width="1" stroke-dasharray="2 1"/>
<line x1="273.5" y1="190.5" x2="273.5" y2="234.5" stroke="#ffff00" stroke-width="1"/>
<line x1="269.5" y1="194" x2="269.5" y2="231" stroke="#ffff00" stroke-width="1"/>
<line x1="258.5" y1="194" x2="258.5" y2="231" stroke="#ffff00" stroke-width="1"/>
<line x1="239.5" y1="196" x2="239.5" y2="229" stroke="#ffff00" stroke-width="1"/>
<line x1="237" y1="204.5" x2="270" y2="204.5" stroke="#ffff00" stroke-width="1"/>
<line x1="237" y1="220.5" x2="270" y2="220.5" stroke="#ffff00" stroke-width="1"/>
<polyline points="241,204.5 254,203" fill="none" stroke="#ffff00" stroke-width="1"/>
<polyline points="241,220.5 254,222" fill="none" stroke="#ffff00" stroke-width="1"/>
<rect x="230.5" y="220.5" width="6.5" height="6" rx="0" fill="none" stroke="#ffff00" stroke-width="1"/>
<line x1="230.5" y1="220.5" x2="237" y2="226.5" stroke="#ffff00" stroke-width="1"/>
<line x1="237" y1="220.5" x2="230.5" y2="226.5" stroke="#ffff00" stroke-width="1"/>
<rect x="260.5" y="222" width="9" height="8.5" rx="0" fill="none" stroke="#ffff00" stroke-width="1"/>
<line x1="260.5" y1="222" x2="269.5" y2="230.5" stroke="#ffff00" stroke-width="1"/>
<line x1="269.5" y1="222" x2="260.5" y2="230.5" stroke="#ffff00" stroke-width="1"/>
<rect x="230.5" y="198.5" width="6.5" height="6" rx="0" fill="none" stroke="#ffff00" stroke-width="1"/>
<path d="M260.5,203 V197 Q261,194.5 265,194.5 Q269.5,194.5 269.5,197 V203 Z" fill="none" stroke="#ffff00" stroke-width="1"/>
<path d="M262.5,203 Q262.5,198 266,198" fill="none" stroke="#ffff00" stroke-width="1"/>
<path d="M231,200.5 H219 Q215,201.5 215,206 V219 Q215,223.5 219,225.5 H231" fill="none" stroke="#ffff00" stroke-width="2.2"/>
<path d="M228,203.5 H223 Q218.8,204.5 218.8,208 V217 Q218.8,221 223,222.5 H228" fill="none" stroke="#ffff00" stroke-width="1.8"/>
<circle cx="221" cy="212.5" r="2.2" fill="none" stroke="#ffff00" stroke-width="1.4" shape-rendering="geometricPrecision"/>
<line x1="222" y1="206.5" x2="229" y2="206.5" stroke="#ffff00" stroke-width="1"/>
<line x1="222" y1="219.5" x2="229" y2="219.5" stroke="#ffff00" stroke-width="1"/>
<line x1="228" y1="203" x2="228" y2="223" stroke="#ffff00" stroke-width="2"/>
<line x1="229" y1="199.5" x2="239" y2="199.5" stroke="#ff0000" stroke-width="1" stroke-dasharray="3 3"/>
<line x1="229" y1="229.5" x2="239" y2="229.5" stroke="#ff0000" stroke-width="1" stroke-dasharray="3 3"/>
<line x1="236.5" y1="205" x2="236.5" y2="220" stroke="#00ffff" stroke-width="1"/>
<line x1="255.5" y1="193.5" x2="255.5" y2="232.5" stroke="#00ffff" stroke-width="1"/>
<line x1="255" y1="193.5" x2="263" y2="193.5" stroke="#00ffff" stroke-width="1"/>
<line x1="255" y1="232.5" x2="263" y2="232.5" stroke="#00ffff" stroke-width="1"/>
<path d="M262,203.5 H265.5 V221.5 H262" fill="none" stroke="#00ffff" stroke-width="1"/>
<rect x="233" y="209" width="3" height="4.5" rx="0" fill="#00ff00" stroke="#00ff00" stroke-width="0"/>
<rect x="263" y="209" width="2" height="4" rx="0" fill="#00ff00" stroke="#00ff00" stroke-width="0"/>
<rect x="210" y="210.5" width="3" height="3" rx="0" fill="#00ff00" stroke="#00ff00" stroke-width="0"/>
<path d="M252.5,207 V213 Q252.5,215 254,215" fill="none" stroke="#00ff00" stroke-width="1"/>
<line x1="196" y1="212.5" x2="321" y2="212.5" stroke="#ff0000" stroke-width="1" stroke-dasharray="7 4"/>
<line x1="257.5" y1="79" x2="257.5" y2="319" stroke="#ff0000" stroke-width="1" stroke-dasharray="5 3"/>
<polygon points="287,177.5 293,177.5 293,190 291,193 285.5,193 283,197 283,222 287,232 287,245.5 280,245.5 280,233 275,223 275,196 283,189 287,186" fill="url(#h2)" stroke="#ffff00" stroke-width="1"/>
<polygon points="286,194 292,194 290.5,224 284.5,224" fill="url(#h1)" stroke="#ffff00" stroke-width="1"/>
<polyline points="294.3,179.5 288.5,244.5 299.5,244.5 304.8,179.5" fill="none" stroke="#ffff00" stroke-width="1.5"/>
<polygon points="306,178.5 313.5,178.5 313,193 306,193" fill="url(#h1)" stroke="#ffff00" stroke-width="1"/>
<polygon points="304,195 310,195 308,226 301.5,226" fill="url(#h1)" stroke="#00ff00" stroke-width="1"/>
<line x1="304" y1="195" x2="301.5" y2="226" stroke="#ffff00" stroke-width="1.6"/>
<polygon points="301.5,228 307,228 305,247 299.5,247" fill="url(#h1)" stroke="#00ff00" stroke-width="1"/>
<line x1="301.5" y1="228" x2="299.5" y2="247" stroke="#ffff00" stroke-width="1.6"/>
<rect x="302.5" y="202.5" width="4" height="3.5" rx="0" fill="#000000" stroke="#ffff00" stroke-width="1.4"/>
<polyline points="286.5,178.5 288.5,175.5 311,175.5 313.5,178.5" fill="none" stroke="#ffff00" stroke-width="1.4"/>
<line x1="287" y1="178" x2="313" y2="178" stroke="#ffff00" stroke-width="1.5"/>
<polygon points="298.5,175 303,167.5 305.5,169 301,176" fill="#ffff00" stroke="#ffff00" stroke-width="1.4"/>
<line x1="300" y1="173.5" x2="302.5" y2="169" stroke="#ff0000" stroke-width="1" stroke-dasharray="2 1"/>
<line x1="279" y1="247" x2="306" y2="247" stroke="#ffff00" stroke-width="4"/>
<line x1="279.5" y1="249" x2="279.5" y2="258" stroke="#ffff00" stroke-width="1"/>
<line x1="283.5" y1="249" x2="283.5" y2="258" stroke="#ffff00" stroke-width="1"/>
<line x1="291.5" y1="249" x2="291.5" y2="258" stroke="#ffff00" stroke-width="1"/>
<rect x="285.5" y="224.5" width="3" height="2.5" rx="0" fill="#00ff00" stroke="#00ff00" stroke-width="0"/>
<rect x="302" y="231" width="3" height="3" rx="0" fill="#00ff00" stroke="#00ff00" stroke-width="0"/>
<line x1="296.5" y1="212" x2="296.5" y2="240" stroke="#00ff00" stroke-width="1"/>
<line x1="299.3" y1="180" x2="294" y2="250" stroke="#ff0000" stroke-width="1" stroke-dasharray="6 3"/>
<line x1="292" y1="203.5" x2="296" y2="203.5" stroke="#ff0000" stroke-width="1"/>
<line x1="299" y1="203.5" x2="302" y2="203.5" stroke="#ff0000" stroke-width="1"/>
<line x1="309" y1="203" x2="313" y2="203.5" stroke="#ff0000" stroke-width="1"/>
<line x1="316" y1="205" x2="320" y2="206" stroke="#ff0000" stroke-width="1"/>
<polyline points="310.5,195.8 318,197 325.5,198.9 332,201.8 338,205 343,208.6 347.6,212.2 353.4,216.8" fill="none" stroke="#ffff00" stroke-width="3" stroke-linejoin="round"/>
<polyline points="310.5,195.8 318,197 325.5,198.9 332,201.8 338,205 343,208.6 347.6,212.2 353.4,216.8" fill="none" stroke="#000000" stroke-width="1" stroke-linejoin="round"/>
<polyline points="310.5,195.8 318,197 325.5,198.9 332,201.8 338,205 343,208.6 347.6,212.2 353.4,216.8" fill="none" stroke="#00ff00" stroke-width="1" stroke-dasharray="2 1"/>
<polyline points="350.5,220.2 336.5,210 333,208.6 330.5,210 326.3,220 326.5,223.5 329,226 341,233.3" fill="none" stroke="#ffff00" stroke-width="3" stroke-linejoin="round"/>
<polyline points="350.5,220.2 336.5,210 333,208.6 330.5,210 326.3,220 326.5,223.5 329,226 341,233.3" fill="none" stroke="#000000" stroke-width="1" stroke-linejoin="round"/>
<polyline points="350.5,220.2 336.5,210 333,208.6 330.5,210 326.3,220 326.5,223.5 329,226 341,233.3" fill="none" stroke="#00ff00" stroke-width="1" stroke-dasharray="2 1"/>
<line x1="341.5" y1="233" x2="352.5" y2="217.5" stroke="#ffff00" stroke-width="1"/>
<polyline points="363,207.8 357,209.8 352.7,216.5 340,237.6" fill="none" stroke="#ffff00" stroke-width="1"/>
<polyline points="363,212 358.8,215.4 345,243" fill="none" stroke="#ffff00" stroke-width="1"/>
<polyline points="357.4,220.8 365,226 373,231.2 380,232 388,232.5" fill="none" stroke="#ffff00" stroke-width="3" stroke-linejoin="round"/>
<polyline points="357.4,220.8 365,226 373,231.2 380,232 388,232.5" fill="none" stroke="#000000" stroke-width="1" stroke-linejoin="round"/>
<polyline points="357.4,220.8 365,226 373,231.2 380,232 388,232.5" fill="none" stroke="#00ff00" stroke-width="1" stroke-dasharray="2 1"/>
<polyline points="355.5,226 367.7,233 378,236.8" fill="none" stroke="#ffff00" stroke-width="3" stroke-linejoin="round"/>
<polyline points="355.5,226 367.7,233 378,236.8" fill="none" stroke="#000000" stroke-width="1" stroke-linejoin="round"/>
<polyline points="355.5,226 367.7,233 378,236.8" fill="none" stroke="#00ff00" stroke-width="1" stroke-dasharray="2 1"/>
<polyline points="306,226.5 319.3,227.7 325,230.2 339.5,237" fill="none" stroke="#ffff00" stroke-width="3" stroke-linejoin="round"/>
<polyline points="306,226.5 319.3,227.7 325,230.2 339.5,237" fill="none" stroke="#000000" stroke-width="1" stroke-linejoin="round"/>
<polyline points="306,226.5 319.3,227.7 325,230.2 339.5,237" fill="none" stroke="#00ff00" stroke-width="1" stroke-dasharray="2 1"/>
<polyline points="369.5,188 369.5,176.5 385.5,176.5 385.5,214.5 378.5,214.5" fill="none" stroke="#ffff00" stroke-width="1"/>
<line x1="384.5" y1="215" x2="384.5" y2="231" stroke="#ffff00" stroke-width="1"/>
<rect x="367.5" y="188.5" width="9" height="2" rx="0" fill="#ffff00" stroke="#ffff00" stroke-width="1"/>
<polyline points="367,190.5 363.5,195 363.5,201.5 365.5,204.5" fill="none" stroke="#ffff00" stroke-width="1"/>
<polyline points="377,190.5 381.5,196 381.5,200.5 379,204.5" fill="none" stroke="#ffff00" stroke-width="1"/>
<line x1="362" y1="204.5" x2="383" y2="204.5" stroke="#ffff00" stroke-width="1"/>
<rect x="365.5" y="204.5" width="13" height="10" rx="0" fill="none" stroke="#ffff00" stroke-width="1"/>
<polyline points="366.5,215 367,220 370,222.5 374,222.5 377,220 378,215" fill="none" stroke="#ffff00" stroke-width="1.4"/>
<line x1="370.5" y1="216" x2="370.5" y2="220" stroke="#ffff00" stroke-width="1"/>
<line x1="374.5" y1="216" x2="374.5" y2="220" stroke="#ffff00" stroke-width="1"/>
<circle cx="371.5" cy="197.5" r="2.4" fill="none" stroke="#ffff00" stroke-width="1" shape-rendering="geometricPrecision"/>
<line x1="367" y1="197.5" x2="369" y2="197.5" stroke="#ffff00" stroke-width="1"/>
<line x1="370.5" y1="223" x2="370.5" y2="236" stroke="#ffff00" stroke-width="1"/>
<line x1="377.5" y1="170" x2="377.5" y2="234" stroke="#ff0000" stroke-width="1" stroke-dasharray="5 3"/>
<line x1="359" y1="197.5" x2="384" y2="197.5" stroke="#ff0000" stroke-width="1" stroke-dasharray="3 3"/>
<rect x="397.5" y="193.5" width="23" height="21" rx="0" fill="none" stroke="#ffff00" stroke-width="1"/>
<line x1="397.5" y1="199.5" x2="420.5" y2="199.5" stroke="#ffff00" stroke-width="1"/>
<line x1="396" y1="197.5" x2="421" y2="197.5" stroke="#ff0000" stroke-width="1" stroke-dasharray="6 3"/>
<polyline points="392.5,231 392.5,217 394.5,214.5 423.5,214.5 425.5,217 425.5,231" fill="none" stroke="#ffff00" stroke-width="1"/>
<line x1="394.5" y1="215" x2="423.5" y2="215" stroke="#ffff00" stroke-width="2"/>
<rect x="397" y="219" width="24" height="11" rx="0" fill="url(#h3)" stroke="#ffff00" stroke-width="2"/>
<rect x="388" y="231" width="85" height="2.4" fill="#ff0" shape-rendering="geometricPrecision"/>
<rect x="373.5" y="235.5" width="96.5" height="2.4" fill="#ff0" shape-rendering="geometricPrecision"/>
<polyline points="388,231.5 390.5,228.5" fill="none" stroke="#ffff00" stroke-width="1"/>
<polyline points="473,231.5 469,238" fill="none" stroke="#00ff00" stroke-width="1"/>
<polyline points="389,233.5 390.5,235.5" fill="none" stroke="#ffff00" stroke-width="1"/>
<polyline points="400,233.5 398.5,235.5" fill="none" stroke="#ffff00" stroke-width="1"/>
<path d="M390.5,237.5 H398.5 V243 Q398.5,247 394.5,247 Q390.5,247 390.5,243 Z" fill="#ff0" stroke="#ff0" stroke-width="0.6" shape-rendering="geometricPrecision"/>
<path d="M392.5,240.5 H396.5 V243 Q396.5,245 394.5,245 Q392.5,245 392.5,243 Z" fill="#000" shape-rendering="geometricPrecision"/>
<line x1="393.5" y1="240.5" x2="393.5" y2="245" stroke="#00ff00" stroke-width="1"/>
<line x1="395.5" y1="241" x2="395.5" y2="245" stroke="#00ff00" stroke-width="1"/>
<line x1="393.5" y1="241.5" x2="396.5" y2="241.5" stroke="#ffff00" stroke-width="1"/>
<polyline points="418,233.5 419.5,235.5" fill="none" stroke="#ffff00" stroke-width="1"/>
<polyline points="429,233.5 427.5,235.5" fill="none" stroke="#ffff00" stroke-width="1"/>
<path d="M419.5,237.5 H427.5 V243 Q427.5,247 423.5,247 Q419.5,247 419.5,243 Z" fill="#ff0" stroke="#ff0" stroke-width="0.6" shape-rendering="geometricPrecision"/>
<path d="M421.5,240.5 H425.5 V243 Q425.5,245 423.5,245 Q421.5,245 421.5,243 Z" fill="#000" shape-rendering="geometricPrecision"/>
<line x1="422.5" y1="240.5" x2="422.5" y2="245" stroke="#00ff00" stroke-width="1"/>
<line x1="424.5" y1="241" x2="424.5" y2="245" stroke="#00ff00" stroke-width="1"/>
<line x1="422.5" y1="241.5" x2="425.5" y2="241.5" stroke="#ffff00" stroke-width="1"/>
<polyline points="434,231 436.5,226 439.8,223.6 451.5,223.6 454.8,226 457.5,231" fill="none" stroke="#ffff00" stroke-width="3" stroke-linejoin="round"/>
<polyline points="434,231 436.5,226 439.8,223.6 451.5,223.6 454.8,226 457.5,231" fill="none" stroke="#000000" stroke-width="1" stroke-linejoin="round"/>
<polyline points="434,231 436.5,226 439.8,223.6 451.5,223.6 454.8,226 457.5,231" fill="none" stroke="#00ff00" stroke-width="1" stroke-dasharray="2 1"/>
<rect x="432" y="229" width="3" height="2" rx="0" fill="#ffff00" stroke="#ffff00" stroke-width="1"/>
<rect x="457" y="229" width="3" height="2" rx="0" fill="#ffff00" stroke="#ffff00" stroke-width="1"/>
<line x1="445.5" y1="209" x2="445.5" y2="243" stroke="#ff0000" stroke-width="1" stroke-dasharray="5 3"/>
<polyline points="363.5,261 363.5,249.5 403,249.5" fill="none" stroke="#ffff00" stroke-width="1"/>
<polyline points="403,249 402.5,253 401.5,256 402.5,260" fill="none" stroke="#00ff00" stroke-width="1"/>
<line x1="338" y1="254.5" x2="403" y2="254.5" stroke="#ff0000" stroke-width="1" stroke-dasharray="6 3"/>
<polyline points="401,259.7 470,259.7" fill="none" stroke="#ffff00" stroke-width="3.4" stroke-linejoin="round"/>
<polyline points="401,259.7 470,259.7" fill="none" stroke="#000000" stroke-width="1.4" stroke-linejoin="round"/>
<polyline points="401,259.7 470,259.7" fill="none" stroke="#00ff00" stroke-width="1" stroke-dasharray="1 3"/>
<rect x="365" y="262.3" width="105" height="2.6" fill="#ff0" shape-rendering="geometricPrecision"/>
<polyline points="364,261 368,265" fill="none" stroke="#ffff00" stroke-width="1.5"/>
<rect x="371" y="265" width="3" height="2" rx="0" fill="#ffff00" stroke="#ffff00" stroke-width="1"/>
<polyline points="469.5,238 470,254 471.5,257 469.8,259.5 470,265.5" fill="none" stroke="#00ff00" stroke-width="1"/>
<rect x="352.5" y="246.5" width="9" height="18" rx="0" fill="none" stroke="#ffff00" stroke-width="1.4"/>
<line x1="355.5" y1="246.5" x2="355.5" y2="264.5" stroke="#ffff00" stroke-width="1"/>
<line x1="359.5" y1="246.5" x2="359.5" y2="264.5" stroke="#ffff00" stroke-width="1"/>
<line x1="352.5" y1="250.5" x2="361.5" y2="250.5" stroke="#ffff00" stroke-width="1"/>
<line x1="352.5" y1="259.5" x2="361.5" y2="259.5" stroke="#ffff00" stroke-width="1"/>
<path d="M355,246 V243 Q355,241.5 357,241.5 Q359.5,241.5 359.5,243 V246" fill="none" stroke="#ffff00" stroke-width="1.4"/>
<line x1="357.5" y1="240" x2="357.5" y2="266" stroke="#ff0000" stroke-width="1" stroke-dasharray="3 2"/>
<rect x="347.5" y="249.5" width="4" height="10" rx="0" fill="none" stroke="#ffff00" stroke-width="1"/>
<rect x="337" y="251" width="10.5" height="7.5" rx="0" fill="none" stroke="#ffff00" stroke-width="1.6"/>
<rect x="320.5" y="238.5" width="15" height="8.5" rx="4.2" fill="none" stroke="#ffff00" stroke-width="1.2"/>
<path d="M320.5,246.5 H316 Q311.5,246 311.5,242.5 Q311.5,239 316,238.5 H320.5" fill="none" stroke="#ffff00" stroke-width="1"/>
<path d="M322,237 V234.5 Q322,230 328,230 Q334,230 334,234.5 V237 Z" fill="none" stroke="#ffff00" stroke-width="1.8"/>
<rect x="326.5" y="232.5" width="3" height="3" rx="0" fill="#000000" stroke="#ffff00" stroke-width="1"/>
<line x1="305" y1="248" x2="344" y2="248" stroke="#ffff00" stroke-width="2"/>
<line x1="313" y1="242.5" x2="341" y2="242.5" stroke="#ff0000" stroke-width="1" stroke-dasharray="4 2"/>
<line x1="327.5" y1="236" x2="327.5" y2="268" stroke="#ff0000" stroke-width="1" stroke-dasharray="4 2"/>
<polyline points="319.5,249 317,253 317,256 323,262.5 333,262.5 336,258 336,251 334.5,249" fill="none" stroke="#ffff00" stroke-width="1.4"/>
<line x1="323" y1="262" x2="333" y2="262" stroke="#ffff00" stroke-width="2.5"/>
<circle cx="327.8" cy="254.5" r="2.5" fill="none" stroke="#ffff00" stroke-width="1" shape-rendering="geometricPrecision"/>
<path d="M335,252.5 Q332.5,254.5 335,256.5" fill="none" stroke="#ffff00" stroke-width="1"/>
<line x1="316" y1="254.5" x2="336" y2="254.5" stroke="#ff0000" stroke-width="1" stroke-dasharray="4 3"/>
<polyline points="306,228.5 316,232 316,237.5 306,237.5" fill="none" stroke="#ffff00" stroke-width="1.3"/>
<text transform="translate(266,117.4) scale(0.74,1) skewX(-6)" font-size="9.8" fill="#00ff00" stroke="#00ff00" stroke-width="0.25" text-anchor="start" font-family='"Liberation Sans", sans-serif'>20</text>
<polyline points="276,118.5 261.5,118.5 261.5,121 263.5,150" fill="none" stroke="#00ff00" stroke-width="1"/>
<text transform="translate(289,117.4) scale(0.74,1) skewX(-6)" font-size="9.8" fill="#00ff00" stroke="#00ff00" stroke-width="0.25" text-anchor="start" font-family='"Liberation Sans", sans-serif'>21</text>
<polyline points="297.5,118.5 286.5,118.5 285.5,121 283,150 281.5,187" fill="none" stroke="#00ff00" stroke-width="1"/>
<text transform="translate(308,118.2) scale(0.74,1) skewX(-6)" font-size="9.8" fill="#00ff00" stroke="#00ff00" stroke-width="0.25" text-anchor="start" font-family='"Liberation Sans", sans-serif'>22</text>
<text transform="translate(325,118.2) scale(0.74,1) skewX(-6)" font-size="9.8" fill="#00ff00" stroke="#00ff00" stroke-width="0.25" text-anchor="start" font-family='"Liberation Sans", sans-serif'>23</text>
<text transform="translate(340,118.2) scale(0.74,1) skewX(-6)" font-size="9.8" fill="#00ff00" stroke="#00ff00" stroke-width="0.25" text-anchor="start" font-family='"Liberation Sans", sans-serif'>24</text>
<polyline points="294,172 306.5,119.5 319.5,119.5 322,123 324.5,119.5 334.5,119.5 337,123 339.5,119.5 349,119.5" fill="none" stroke="#00ff00" stroke-width="1"/>
<text transform="translate(364,118.2) scale(0.74,1) skewX(-6)" font-size="9.8" fill="#00ff00" stroke="#00ff00" stroke-width="0.25" text-anchor="start" font-family='"Liberation Sans", sans-serif'>25</text>
<text transform="translate(381.5,118.2) scale(0.74,1) skewX(-6)" font-size="9.8" fill="#00ff00" stroke="#00ff00" stroke-width="0.25" text-anchor="start" font-family='"Liberation Sans", sans-serif'>26</text>
<text transform="translate(404,118.2) scale(0.74,1) skewX(-6)" font-size="9.8" fill="#00ff00" stroke="#00ff00" stroke-width="0.25" text-anchor="start" font-family='"Liberation Sans", sans-serif'>27</text>
<polyline points="313,178 358,119.5 374.5,119.5 377,124.5 379.5,119.5 396.5,119.5 399,124.5 401.5,119.5 415,119.5" fill="none" stroke="#00ff00" stroke-width="1"/>
<text transform="translate(432,118.4) scale(0.74,1) skewX(-6)" font-size="9.8" fill="#00ff00" stroke="#00ff00" stroke-width="0.25" text-anchor="start" font-family='"Liberation Sans", sans-serif'>28</text>
<polyline points="300,192 313,185 426,120.5 448,120.5" fill="none" stroke="#00ff00" stroke-width="1"/>
<text transform="translate(162,158.4) scale(0.74,1) skewX(-6)" font-size="9.8" fill="#00ff00" stroke="#00ff00" stroke-width="0.25" text-anchor="start" font-family='"Liberation Sans", sans-serif'>19</text>
<text transform="translate(179,158.4) scale(0.74,1) skewX(-6)" font-size="9.8" fill="#00ff00" stroke="#00ff00" stroke-width="0.25" text-anchor="start" font-family='"Liberation Sans", sans-serif'>18</text>
<text transform="translate(196,158.4) scale(0.74,1) skewX(-6)" font-size="9.8" fill="#00ff00" stroke="#00ff00" stroke-width="0.25" text-anchor="start" font-family='"Liberation Sans", sans-serif'>17</text>
<polyline points="154,161.5 168,161.5 170,165.5 172,161.5 186,161.5 188,165.5 190,161.5 207,161.5 254,182" fill="none" stroke="#00ff00" stroke-width="1"/>
<text transform="translate(194,212.7) scale(0.74,1) skewX(-6)" font-size="9.8" fill="#00ff00" stroke="#00ff00" stroke-width="0.25" text-anchor="start" font-family='"Liberation Sans", sans-serif'>16</text>
<polyline points="184,214.5 208,214.5 211,213.5 219,212.5" fill="none" stroke="#00ff00" stroke-width="1"/>
<text transform="translate(195.5,224.4) scale(0.74,1) skewX(-6)" font-size="9.8" fill="#00ff00" stroke="#00ff00" stroke-width="0.25" text-anchor="start" font-family='"Liberation Sans", sans-serif'>15</text>
<polyline points="182,226.5 205,226.5 220,216" fill="none" stroke="#00ff00" stroke-width="1"/>
<text transform="translate(196,242.4) scale(0.74,1) skewX(-6)" font-size="9.8" fill="#00ff00" stroke="#00ff00" stroke-width="0.25" text-anchor="start" font-family='"Liberation Sans", sans-serif'>14</text>
<polyline points="181,244.5 204,244.5 222,227" fill="none" stroke="#00ff00" stroke-width="1"/>
<text transform="translate(196,257.6) scale(0.74,1) skewX(-6)" font-size="9.8" fill="#00ff00" stroke="#00ff00" stroke-width="0.25" text-anchor="start" font-family='"Liberation Sans", sans-serif'>13</text>
<polyline points="181,259.5 204,259.5 241,229" fill="none" stroke="#00ff00" stroke-width="1"/>
<text transform="translate(196,276.4) scale(0.74,1) skewX(-6)" font-size="9.8" fill="#00ff00" stroke="#00ff00" stroke-width="0.25" text-anchor="start" font-family='"Liberation Sans", sans-serif'>12</text>
<polyline points="183,278.5 203,278.5 257,232" fill="none" stroke="#00ff00" stroke-width="1"/>
<text transform="translate(196,292.9) scale(0.74,1) skewX(-6)" font-size="9.8" fill="#00ff00" stroke="#00ff00" stroke-width="0.25" text-anchor="start" font-family='"Liberation Sans", sans-serif'>11</text>
<polyline points="180,294.5 203,294.5 225,269 247,243" fill="none" stroke="#00ff00" stroke-width="1"/>
<text transform="translate(204,309.6) scale(0.74,1) skewX(-6)" font-size="9.8" fill="#00ff00" stroke="#00ff00" stroke-width="0.25" text-anchor="start" font-family='"Liberation Sans", sans-serif'>10</text>
<polyline points="180,311.5 215,311.5 243,290" fill="none" stroke="#00ff00" stroke-width="1"/>
<text transform="translate(257,307.4) scale(0.74,1) skewX(-6)" font-size="9.8" fill="#00ff00" stroke="#00ff00" stroke-width="0.25" text-anchor="start" font-family='"Liberation Sans", sans-serif'>9</text>
<polyline points="244,309.5 269,309.5 270.5,303 270.5,245" fill="none" stroke="#00ff00" stroke-width="1"/>
<text transform="translate(301,300.6) scale(0.74,1) skewX(-6)" font-size="9.8" fill="#00ff00" stroke="#00ff00" stroke-width="0.25" text-anchor="start" font-family='"Liberation Sans", sans-serif'>8</text>
<polyline points="311,302.5 297.5,302.5 292,250" fill="none" stroke="#00ff00" stroke-width="1"/>
<text transform="translate(325,300.6) scale(0.74,1) skewX(-6)" font-size="9.8" fill="#00ff00" stroke="#00ff00" stroke-width="0.25" text-anchor="start" font-family='"Liberation Sans", sans-serif'>7</text>
<polyline points="335,302.5 317.5,302.5 306,247" fill="none" stroke="#00ff00" stroke-width="1"/>
<text transform="translate(343,300.6) scale(0.74,1) skewX(-6)" font-size="9.8" fill="#00ff00" stroke="#00ff00" stroke-width="0.25" text-anchor="start" font-family='"Liberation Sans", sans-serif'>6</text>
<polyline points="350,302.5 338.5,302.5 332,258" fill="none" stroke="#00ff00" stroke-width="1"/>
<text transform="translate(367,300.6) scale(0.74,1) skewX(-6)" font-size="9.8" fill="#00ff00" stroke="#00ff00" stroke-width="0.25" text-anchor="start" font-family='"Liberation Sans", sans-serif'>5</text>
<text transform="translate(384,300.6) scale(0.74,1) skewX(-6)" font-size="9.8" fill="#00ff00" stroke="#00ff00" stroke-width="0.25" text-anchor="start" font-family='"Liberation Sans", sans-serif'>4</text>
<polyline points="356,245 362.5,302.5 376,302.5 378,305.5 380,302.5 392,302.5" fill="none" stroke="#00ff00" stroke-width="1"/>
<text transform="translate(430,297.4) scale(0.74,1) skewX(-6)" font-size="9.8" fill="#00ff00" stroke="#00ff00" stroke-width="0.25" text-anchor="start" font-family='"Liberation Sans", sans-serif'>3</text>
<polyline points="438,299.5 424.5,299.5 374,257" fill="none" stroke="#00ff00" stroke-width="1"/>
<text transform="translate(455,297.4) scale(0.74,1) skewX(-6)" font-size="9.8" fill="#00ff00" stroke="#00ff00" stroke-width="0.25" text-anchor="start" font-family='"Liberation Sans", sans-serif'>2</text>
<polyline points="463,299.5 450.5,299.5 421,254" fill="none" stroke="#00ff00" stroke-width="1"/>
<text transform="translate(485,297.4) scale(0.74,1) skewX(-6)" font-size="9.8" fill="#00ff00" stroke="#00ff00" stroke-width="0.25" text-anchor="start" font-family='"Liberation Sans", sans-serif'>1</text>
<polyline points="495,299.5 475.5,299.5 451,225" fill="none" stroke="#00ff00" stroke-width="1"/>
<text transform="translate(343,324.4) scale(0.74,1) skewX(-6)" font-size="9.8" fill="#00ff00" stroke="#00ff00" stroke-width="0.25" text-anchor="start" font-family='"Liberation Sans", sans-serif'>30</text>
<polyline points="356,328.5 337.5,328.5 374,388" fill="none" stroke="#00ff00" stroke-width="1"/>
<text transform="translate(379.5,327.7) scale(0.74,1) skewX(-6)" font-size="9.8" fill="#00ff00" stroke="#00ff00" stroke-width="0.25" text-anchor="start" font-family='"Liberation Sans", sans-serif'>32</text>
<text transform="translate(407,327.7) scale(0.74,1) skewX(-6)" font-size="9.8" fill="#00ff00" stroke="#00ff00" stroke-width="0.25" text-anchor="start" font-family='"Liberation Sans", sans-serif'>31</text>
<polyline points="401.5,394.5 377.5,329.5 394,329.5 397,334.5 400,329.5 420,329.5" fill="none" stroke="#00ff00" stroke-width="1"/>
<text transform="translate(343,521.9) scale(0.74,1) skewX(-6)" font-size="9.8" fill="#00ff00" stroke="#00ff00" stroke-width="0.25" text-anchor="start" font-family='"Liberation Sans", sans-serif'>29</text>
<polyline points="360,523.5 329.5,523.5 324.5,437" fill="none" stroke="#00ff00" stroke-width="1"/>
<line x1="257" y1="78.5" x2="315" y2="78.5" stroke="#ffffff" stroke-width="1"/>
</svg></body></html>
